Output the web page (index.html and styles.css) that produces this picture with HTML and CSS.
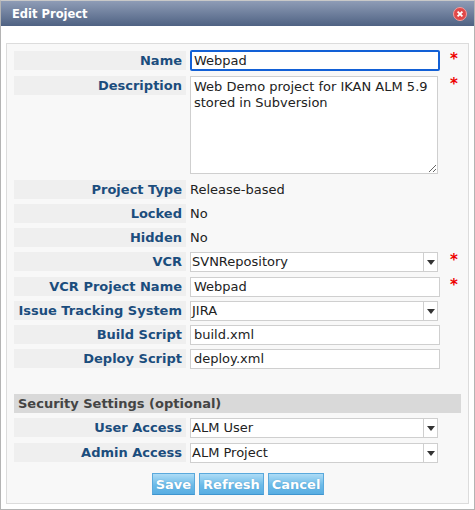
FILE: index.html
```html
<!DOCTYPE html>
<html>
<head>
<meta charset="utf-8">
<link rel="stylesheet" href="styles.css">
</head>
<body>
<div class="window">
  <div class="titlebar">
    <span class="title">Edit Project</span>
    <span class="close"><svg width="14" height="14" viewBox="0 0 14 14"><circle cx="7" cy="7" r="6.5" fill="#e04848" stroke="#f2a0a0" stroke-width="1"/><path d="M4.6 4.6 L9.4 9.4 M9.4 4.6 L4.6 9.4" stroke="#fff" stroke-width="1.8"/></svg></span>
  </div>
  <div class="content">
    <div class="panel">
      <div class="form">
        <div class="label">Name</div>
        <div class="value"><div class="input focus">Webpad</div></div>
        <div class="req">*</div>

        <div class="label">Description</div>
        <div class="value"><textarea class="area" readonly>Web Demo project for IKAN ALM 5.9
stored in Subversion</textarea></div>
        <div class="req">*</div>

        <div class="label">Project Type</div>
        <div class="value text">Release-based</div>
        <div></div>

        <div class="label">Locked</div>
        <div class="value text">No</div>
        <div></div>

        <div class="label">Hidden</div>
        <div class="value text">No</div>
        <div></div>

        <div class="label">VCR</div>
        <div class="value"><div class="select"><span class="sel-text">SVNRepository</span><span class="arrow"></span></div></div>
        <div class="req">*</div>

        <div class="label">VCR Project Name</div>
        <div class="value"><div class="input">Webpad</div></div>
        <div class="req">*</div>

        <div class="label">Issue Tracking System</div>
        <div class="value"><div class="select"><span class="sel-text">JIRA</span><span class="arrow"></span></div></div>
        <div></div>

        <div class="label">Build Script</div>
        <div class="value"><div class="input">build.xml</div></div>
        <div></div>

        <div class="label">Deploy Script</div>
        <div class="value"><div class="input">deploy.xml</div></div>
        <div></div>
      </div>

      <div class="section">Security Settings (optional)</div>

      <div class="form form2">
        <div class="label">User Access</div>
        <div class="value"><div class="select"><span class="sel-text">ALM User</span><span class="arrow"></span></div></div>
        <div></div>

        <div class="label">Admin Access</div>
        <div class="value"><div class="select"><span class="sel-text">ALM Project</span><span class="arrow"></span></div></div>
        <div></div>
      </div>

      <div class="buttons">
        <button class="btn">Save</button>
        <button class="btn">Refresh</button>
        <button class="btn">Cancel</button>
      </div>
    </div>
  </div>
</div>
</body>
</html>
```
FILE: styles.css
```css
* { box-sizing: border-box; }
html, body { margin: 0; padding: 0; background: #fff; }
body { font-family: "DejaVu Sans", Verdana, sans-serif; font-size: 13px; color: #222; }

.window {
  width: 475px;
  height: 510px;
  border: 1px solid #b4b4b4;
  border-top-color: #c8c8c8;
  background: #fff;
  display: flex;
  flex-direction: column;
}
.titlebar {
  height: 25px;
  flex: none;
  background: linear-gradient(#8e9cb6, #4f6283);
  display: flex;
  align-items: center;
  justify-content: space-between;
  padding: 0 7px 0 11px;
}
.title { color: #fff; font-weight: bold; font-size: 11.5px; padding-top: 1px; }
.close { display: flex; width: 14px; height: 14px; margin-top: 1px; }

.content { flex: 1; padding: 17px 5px 4px 5px; }
.panel {
  height: 461px;
  border: 1px solid #dcdcdc;
  background: #f8f8f8;
  padding: 6px 6px 0 7px;
}

.form {
  display: grid;
  grid-template-columns: 172px 250px 22px;
  column-gap: 4px;
  row-gap: 4px;
  grid-template-rows: 21px 100px 20px 20px 20px 21px 20px 20px 20px 20px;
}
.form2 { grid-template-rows: 21px 21px; margin-top: 4px; }

.label {
  background: #efefef;
  color: #1b4d7d;
  font-weight: bold;
  text-align: right;
  padding-right: 4px;
  height: 19px;
  line-height: 19px;
  margin-top: 1px;
  white-space: nowrap;
}
.value { min-width: 0; }
.value.text { line-height: 19px; padding-top: 1px; color: #222; }

.input {
  height: 20px;
  border: 1px solid #cfcfcf;
  background: #fff;
  padding: 0 3px;
  line-height: 18px;
  margin-top: 1px;
  white-space: nowrap;
}
.input.focus {
  height: 21px;
  margin-top: 0;
  border: 2px solid #1260d6;
  border-radius: 2px;
  padding: 0 2px;
  line-height: 17px;
}
.area {
  display: block;
  width: 248px;
  height: 98px;
  margin: 1px 0 0 0;
  border: 1px solid #cfcfcf;
  background: #fff;
  padding: 2px 3px;
  font-family: "DejaVu Sans", Verdana, sans-serif;
  font-size: 13px;
  line-height: 16px;
  color: #222;
  resize: both;
  overflow: hidden;
  outline: none;
}

.select {
  height: 20px;
  width: 248px;
  margin-top: 1px;
  border: 1px solid #cfcfcf;
  background: #fff;
  display: flex;
  align-items: stretch;
}
.sel-text { flex: 1; padding-left: 1px; line-height: 18px; white-space: nowrap; }
.arrow {
  width: 14px;
  border-left: 1px solid #cfcfcf;
  position: relative;
}
.arrow::after {
  content: "";
  position: absolute;
  left: 3px;
  top: 7px;
  border-left: 4px solid transparent;
  border-right: 4px solid transparent;
  border-top: 5px solid #333;
}

.req {
  color: #e00;
  font-weight: bold;
  font-size: 15px;
  line-height: 18px;
  padding-left: 6px;
}

.section {
  margin-top: 26px;
  width: 447px;
  height: 19px;
  background: #d9d9d9;
  color: #444;
  font-weight: bold;
  line-height: 19px;
  padding-left: 4px;
}

.buttons {
  display: flex;
  justify-content: center;
  gap: 4px;
  margin-top: 10px;
}
.btn {
  font-family: "DejaVu Sans", Verdana, sans-serif;
  font-size: 13px;
  font-weight: bold;
  color: #fff;
  height: 22px;
  padding: 0 3px;
  border: 1px solid #5aa9dc;
  border-bottom-color: #3f95cf;
  background: linear-gradient(#aedcf6, #6cbbe8 55%, #58ade2);
  text-shadow: 0 0 1px rgba(60,120,170,0.5);
  cursor: pointer;
}
```
